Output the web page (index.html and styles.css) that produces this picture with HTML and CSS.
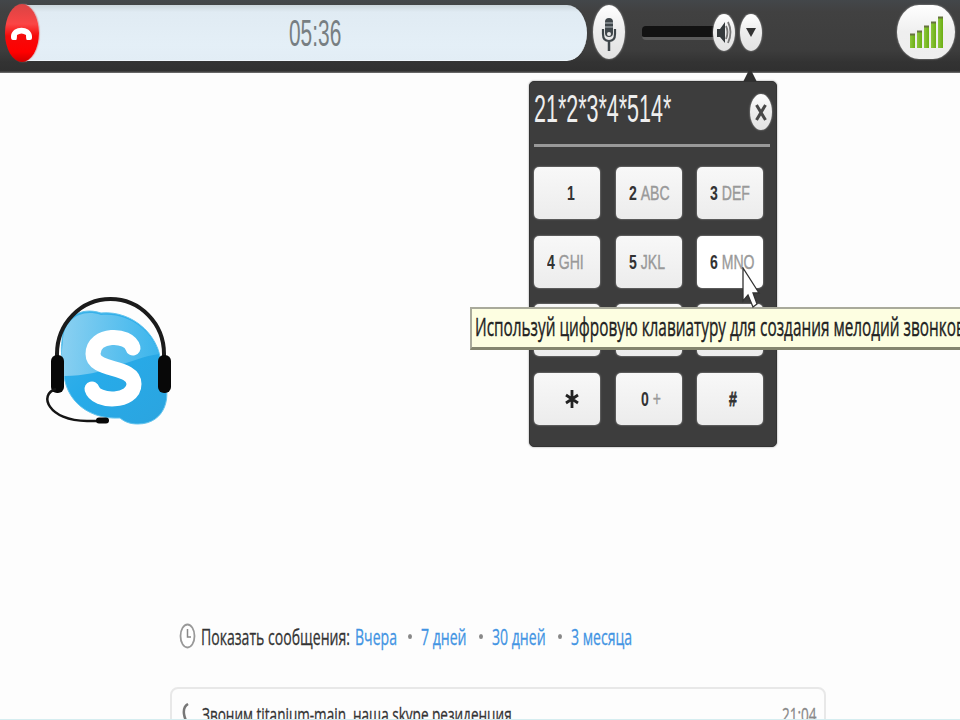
FILE: index.html
```
<!DOCTYPE html>
<html lang="ru">
<head>
    <meta charset="UTF-8">
    <meta name="viewport" content="width=device-width, initial-scale=1.0">
    <title>Skype</title>
    <link rel="stylesheet" href="styles.css">
</head>
<body>
    <header class="callbar">
        <div class="timer"><span class="narrow time">05:36</span></div>
        <button class="hangup">
            <svg width="34" height="58" viewBox="0 0 34 58"><path d="M6 32 C7 21 26 21 27 32 V34 Q27 36 25 36 L22 36 Q21 36 21 31 Q16.500 28 12 31 Q12 36 11 36 L8 36 Q6 36 6 33Z" fill="#fff"/></svg>
        </button>
        <button class="round mic">
            <svg width="32" height="54" viewBox="0 0 32 54">
                <rect x="12" y="13" width="8" height="19" rx="4" fill="#3f464a"/>
                <path d="M12 18H20M12 22H20" stroke="#90979a" stroke-width="1.5"/>
                <path d="M10 24V29Q10 36 16 36T22 29V24" fill="none" stroke="#3f464a" stroke-width="2.2"/>
                <path d="M16 36V46" stroke="#3f464a" stroke-width="2.5"/>
                <circle cx="16" cy="29" r="2" fill="#e8e8e8"/>
            </svg>
        </button>
        <div class="track"></div>
        <button class="round volume">
            <svg width="22" height="37" viewBox="0 0 22 37">
                <path d="M4 15H7L12 8V29L7 23H4Z" fill="#34393b"/>
                <path d="M13 12Q16 18 13 25M15 8Q20 18 15 29" fill="none" stroke="#777" stroke-width="1.8"/>
            </svg>
        </button>
        <button class="round more">
            <svg width="22" height="37" viewBox="0 0 22 37"><path d="M6 14H16L11 23Z" fill="#333"/></svg>
        </button>
        <button class="signal">
            <svg width="34" height="32" viewBox="0 0 34 32">
                <defs>
                    <linearGradient id="green" x1="0" y1="0" x2="1" y2="0"><stop offset="0" stop-color="#8cc63c"/><stop offset="1" stop-color="#6cae14"/></linearGradient>
                </defs>
                <g fill="url(#green)">
                    <rect x="1" y="18" width="5" height="14"/><rect x="8" y="15" width="5" height="17"/>
                    <rect x="15" y="10" width="5" height="22"/><rect x="22" y="6" width="5" height="26"/>
                    <rect x="29" y="1" width="5" height="31"/>
                </g>
                <path d="M1 18.5H6M8 15.5H13M15 10.5H20M22 6.500H27M29 1.500H34" stroke="#66733f" stroke-width="2"/>
            </svg>
        </button>
    </header>

    <main class="chat">
        <svg class="avatar" width="136" height="147" viewBox="0 0 136 147">
            <defs>
                <linearGradient id="sky" x1="0" y1="0" x2="1" y2="1"><stop offset="0" stop-color="#3fb4ea"/><stop offset=".45" stop-color="#27abe9"/><stop offset="1" stop-color="#2ba4df"/></linearGradient>
                <linearGradient id="shine" x1="0" y1="0" x2="1" y2="0"><stop offset="0" stop-color="#a5daf3"/><stop offset="1" stop-color="#42b9ee"/></linearGradient>
            </defs>
            <path d="M20 53C20 30 38 18 59 25C92 22 122 50 119 84C132 108 123 136 96 136C88 136 83 134 78 130C42 132 19 107 22 77C19 69 19 60 20 53Z" fill="url(#sky)" stroke="#63c4ee"/>
            <path d="M21 53C21 32 39 20 59 27C86 24 110 42 117 66C88 70 63 88 22 88V76C19 68 20 60 21 53Z" fill="url(#shine)" opacity=".75"/>
            <path d="M91 60C87 45 51 45 51 66C51 84 92 77 92 96C92 115 54 115 50 101" fill="none" stroke="#fff" stroke-width="15" stroke-linecap="round"/>
            <path d="M15 72V66A53.500 55 0 0 1 122 66V72" fill="none" stroke="#1b1b1b" stroke-width="4"/>
            <rect x="9" y="67" width="13" height="38" rx="6" fill="#080808"/>
            <rect x="116" y="67" width="13" height="38" rx="6" fill="#080808"/>
            <path d="M14 101C-4 106 6 133 45 133H62" fill="none" stroke="#151515" stroke-width="2.500"/>
            <path d="M57 132.500H64" stroke="#080808" stroke-width="6" stroke-linecap="round"/>
        </svg>

        <div class="history">
            <svg class="clock" width="17" height="26" viewBox="0 0 17 26">
                <ellipse cx="8.500" cy="13" rx="7" ry="11.500" fill="#fff" stroke="#999" stroke-width="1.800"/>
                <path d="M8.500 6V14H12" fill="none" stroke="#888" stroke-width="1.500"/>
            </svg>
            <span class="label"><span class="narrow">Показать сообщения:</span></span>
            <a class="yesterday"><span class="narrow">Вчера</span></a>
            <i></i>
            <a class="week"><span class="narrow">7 дней</span></a>
            <i></i>
            <a class="month"><span class="narrow">30 дней</span></a>
            <i></i>
            <a class="quarter"><span class="narrow">3 месяца</span></a>
        </div>

        <section class="message">
            <svg width="10" height="24" viewBox="0 0 10 24"><path d="M6 1Q1 4 2 11T8 23" fill="none" stroke="#777" stroke-width="2.500"/></svg>
            <div class="text"><span class="narrow">Звоним titanium-main, наша skype резиденция</span></div>
            <div class="stamp"><span class="narrow">21:04</span></div>
        </section>
    </main>

    <div class="dialpad">
        <div class="display">
            <span class="narrow number">21*2*3*4*514*</span>
            <button class="round close">
                <svg width="22" height="36" viewBox="0 0 22 36"><path d="M6.500 11L15.500 26M15.500 11L6.500 26" stroke="#484848" stroke-width="3"/></svg>
            </button>
        </div>
        <div class="keys">
            <button class="key single"><span class="narrow">1</span></button>
            <button class="key"><span class="narrow">2 <em>ABC</em></span></button>
            <button class="key"><span class="narrow">3 <em>DEF</em></span></button>
            <button class="key"><span class="narrow">4 <em>GHI</em></span></button>
            <button class="key"><span class="narrow">5 <em>JKL</em></span></button>
            <button class="key hover"><span class="narrow">6 <em>MNO</em></span></button>
            <button class="key"></button>
            <button class="key"></button>
            <button class="key"></button>
            <button class="key"><svg width="14" height="20" viewBox="0 0 14 20"><path d="M7 1V19M1 6L13 14M13 6L1 14" stroke="#222" stroke-width="2.800"/></svg></button>
            <button class="key zero"><span class="narrow">0 <em>+</em></span></button>
            <button class="key hash"><span class="narrow">#</span></button>
        </div>
    </div>

    <div class="tooltip"><span class="narrow">Используй цифровую клавиатуру для создания мелодий звонков</span></div>

    <svg class="cursor" width="20" height="44" viewBox="0 0 20 44"><path d="M1 1V34L6 28L11 40L15 37L11 26H17Z" fill="#fff" stroke="#333" stroke-width="1.300"/></svg>
</body>
</html>
```
FILE: styles.css
```
* {
    box-sizing: border-box;
}
body {
    margin: 0;
    width: 960px;
    height: 720px;
    overflow: hidden;
    position: relative;
    background: #fdfdfd;
    font-family: "Open Sans", "Noto Sans", sans-serif;
    color: #333;
}
button {
    padding: 0;
    border: 0;
    flex: none;
    font-family: "Liberation Sans", Arial, sans-serif;
}
svg {
    display: block;
    flex: none;
}
/* tall, horizontally squeezed lettering */
.narrow {
    display: inline-block;
    white-space: nowrap;
    transform-origin: 0 50%;
}
.callbar {
    height: 73px;
    display: flex;
    align-items: flex-start;
    padding-top: 5px;
    background: linear-gradient(#43474a 0, #414141 12px, #3d3d3d 50px, #333 62px, #303030 71px, #777 73px);
}
.timer {
    width: 562px;
    height: 56px;
    margin-left: 25px;
    padding-left: 264px;
    border-radius: 0 20px 20px 0 / 0 28px 28px 0;
    background: linear-gradient(#cbd5dc, #e0ebf3 7px, #e4eff7 40px, #e2edf5);
    border-bottom: 1px solid #eef5fa;
}
.time {
    font: 36px/57px "Liberation Sans", Arial, sans-serif;
    color: #777e82;
    transform: scaleX(.58);
}
.hangup {
    width: 34px;
    height: 58px;
    margin: -1px 0 0 -582px;
    border-radius: 50%;
    background: linear-gradient(#d94444, #fb4545 20px, #f50a0a 32px, #ff0000 48px, #cf0000);
    box-shadow: 1px 0 1px #d8b0b5;
}
.round {
    border-radius: 50%;
    background: linear-gradient(#fff, #ececec 50%, #e2e2e2);
    box-shadow: 0 0 2px #aaa;
}
.mic {
    width: 32px;
    height: 54px;
    margin-left: 554px;
}
.track {
    width: 72px;
    height: 14px;
    margin: 21px 0 0 17px;
    border-radius: 4px 0 0 4px;
    background: #121212;
    border-bottom: 3px solid #5b5b5b;
}
.volume, .more {
    width: 22px;
    height: 37px;
    margin-top: 9px;
}
.volume {
    margin-left: -1px;
}
.more {
    margin-left: 5px;
}
.signal {
    display: flex;
    align-items: flex-start;
    width: 58px;
    height: 54px;
    margin-left: 135px;
    padding: 11px 0 0 12px;
    border-radius: 22px / 27px;
    background: linear-gradient(#fff, #efefef 50%, #eee);
    box-shadow: 0 0 2px #aaa;
}
.chat {
    height: 647px;
    overflow: hidden;
    border-bottom: 1px solid #d5edf0;
}
.avatar {
    margin: 215px 0 0 42px;
}
.history {
    height: 30px;
    margin: 186px 0 0 179px;
    display: flex;
    align-items: center;
    font-size: 22px;
    line-height: 28px;
    -webkit-text-stroke: .3px;
}
.history > span, .history > a {
    flex: none;
}
.history a {
    color: #4294e3;
}
.history i {
    width: 4px;
    height: 5px;
    flex: none;
    border-radius: 50%;
    background: #888;
    margin: 0 9px 0 11px;
}
.label {
    width: 150px;
    margin: 0 4px 0 5px;
}
.yesterday {
    width: 42px;
}
.week {
    width: 47px;
}
.month {
    width: 55px;
}
.quarter {
    width: 60px;
}
.history .narrow {
    transform: scaleX(.64);
}
.message {
    width: 656px;
    height: 60px;
    margin: 36px 0 0 170px;
    padding: 14px 0 0 10px;
    display: flex;
    border: 2px solid #e8e8e8;
    border-radius: 8px;
    font-size: 20px;
    line-height: 23px;
    -webkit-text-stroke: .3px;
}
.message .text {
    width: 580px;
    margin-left: 10px;
}
.message .narrow {
    transform: scaleX(.678);
}
.stamp {
    width: 40px;
    color: #888;
}
.dialpad {
    position: absolute;
    left: 529px;
    top: 81px;
    width: 248px;
    height: 366px;
    padding: 0 5px;
    background: #3d3d3d;
    border: 1px solid #333;
    border-radius: 5px;
    box-shadow: 0 0 2px #888;
}
/* pointer up to the arrow button */
.dialpad::before {
    content: "";
    position: absolute;
    left: 213px;
    top: -14px;
    border: 7px solid transparent;
    border-top: 0;
    border-bottom: 14px solid #303030;
}
.display {
    height: 65px;
    margin-left: -1px;
    margin-right: 1px;
    display: flex;
    justify-content: space-between;
    border-bottom: 3px solid #999;
}
.number {
    width: 200px;
    margin-top: 6px;
    font: 38px/42px "Liberation Sans", Arial, sans-serif;
    color: #eee;
    transform: scaleX(.565);
}
.close {
    width: 22px;
    height: 36px;
    margin: 12px -2px 0 0;
}
.keys {
    margin-top: 20px;
    margin-left: -1px;
    display: grid;
    grid-template-columns: repeat(3, 66px);
    grid-auto-rows: 52px;
    gap: 16.500px 15.500px;
}
.key {
    display: flex;
    align-items: center;
    padding-left: 13px;
    border-radius: 5px;
    background: linear-gradient(#f8f8f8, #ececec);
    box-shadow: 0 0 2px #aaa;
    font-size: 21px;
    font-weight: bold;
    color: #333;
}
.key .narrow {
    transform: scaleX(.67);
}
.key em {
    font-style: normal;
    font-weight: normal;
    color: #999;
    -webkit-text-stroke: .4px;
}
.key svg {
    margin-left: 18px;
}
.single {
    padding-left: 33px;
}
.hash {
    padding-left: 32px;
    -webkit-text-stroke: .8px;
}
.zero {
    padding-left: 25px;
}
.hover {
    background: #fff;
}
.tooltip {
    position: absolute;
    left: 470px;
    top: 307px;
    width: 490px;
    height: 43px;
    overflow: hidden;
    padding-left: 3px;
    background: #fdfee1;
    border: 2px solid #a9aa9b;
    border-right: 0;
    border-bottom: 3px solid #85866f;
    font-size: 25px;
    line-height: 35px;
    color: #222;
    -webkit-text-stroke: .4px;
}
.tooltip .narrow {
    transform: scaleX(.614);
}
.cursor {
    position: absolute;
    left: 742px;
    top: 267px;
}
```
